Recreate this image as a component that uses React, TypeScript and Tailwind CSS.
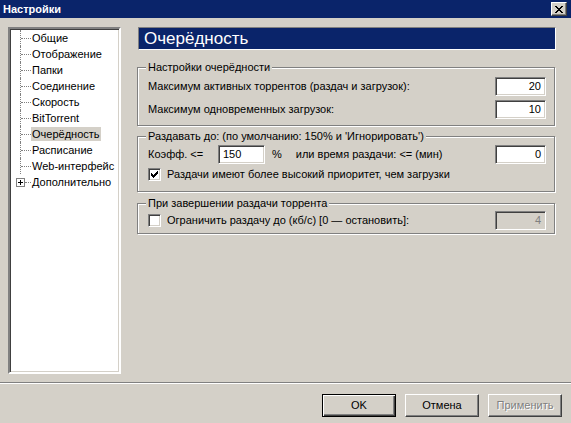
import React from "react";

const sunken =
  "border border-t-[#808080] border-l-[#808080] border-b-white border-r-white shadow-[inset_1px_1px_0_#404040,inset_-1px_-1px_0_#d4d0c8]";
const raised =
  "border border-t-white border-l-white border-b-[#404040] border-r-[#404040] shadow-[inset_-1px_-1px_0_#808080,inset_1px_1px_0_#d4d0c8]";

function Check({ checked }: { checked?: boolean }) {
  return (
    <span className={`w-[13px] h-[13px] bg-white flex items-center justify-center shrink-0 ${sunken}`}>
      {checked && (
        <svg width="7" height="7" viewBox="0 0 7 7" shapeRendering="crispEdges">
          <rect x="0" y="2" width="1" height="3" fill="#000" />
          <rect x="1" y="3" width="1" height="3" fill="#000" />
          <rect x="2" y="4" width="1" height="3" fill="#000" />
          <rect x="3" y="3" width="1" height="3" fill="#000" />
          <rect x="4" y="2" width="1" height="3" fill="#000" />
          <rect x="5" y="1" width="1" height="3" fill="#000" />
          <rect x="6" y="0" width="1" height="3" fill="#000" />
        </svg>
      )}
    </span>
  );
}

function Field({ value, w = "w-[51px]", left, disabled }: { value: string; w?: string; left?: boolean; disabled?: boolean }) {
  return (
    <div
      className={`${w} h-[19px] shrink-0 flex items-center px-[4px] ${left ? "justify-start" : "justify-end"} ${
        disabled ? "bg-[#d4d0c8] text-[#808080]" : "bg-white text-black"
      } ${sunken}`}
    >
      {value}
    </div>
  );
}

const tree = ["Общие", "Отображение", "Папки", "Соединение", "Скорость", "BitTorrent", "Очерёдность", "Расписание", "Web-интерфейс"];

export default function App() {
  return (
    <div className="w-[571px] h-[423px] bg-[#d4d0c8] text-black text-[11px] leading-[13px] font-['Liberation_Sans',Arial,sans-serif] overflow-hidden flex flex-col">
      {/* title bar */}
      <div className="h-[18px] bg-[#0a246a] flex items-center justify-between pl-[3px] pr-[4px]">
        <span className="text-white font-bold">Настройки</span>
        <div className={`w-[16px] h-[14px] bg-[#d4d0c8] flex items-center justify-center ${raised}`}>
          <svg width="8" height="7" viewBox="0 0 8 7" shapeRendering="crispEdges">
            <path d="M0 0h2v1h1v1h2V1h1V0h2v1H7v1H6v1H5v1h1v1h1v1h1v1H6V6H5V5H3v1H2v1H0V6h1V5h1V4h1V3H2V2H1V1H0z" fill="#000" />
          </svg>
        </div>
      </div>

      <div className="flex pt-[9px] pl-[8px] gap-[16px]">
        {/* tree */}
        <div className={`w-[113px] h-[347px] bg-white pt-[1px] border-2 border-t-[#808080] border-l-[#808080] border-b-white border-r-white shadow-[inset_1px_1px_0_#404040,inset_-1px_-1px_0_#d4d0c8]`}>
          {tree.map((t) => (
            <div key={t} className="h-[16px] flex items-center">
              <div className="ml-[10px] w-[11px] self-stretch border-l border-dotted border-[#808080] flex items-center">
                <div className="w-full border-t border-dotted border-[#808080]" />
              </div>
              <span className={`px-[1px] h-[14px] leading-[14px] whitespace-nowrap ${t === "Очерёдность" ? "bg-[#d4d0c8]" : ""}`}>{t}</span>
            </div>
          ))}
          <div className="h-[16px] flex items-center">
            <div className="ml-[6px] w-[9px] h-[9px] border border-[#808080] bg-white flex items-center justify-center">
              <svg width="5" height="5" viewBox="0 0 5 5" shapeRendering="crispEdges">
                <path d="M0 2h5v1H0zM2 0h1v5H2z" fill="#000" />
              </svg>
            </div>
            <div className="w-[6px] border-t border-dotted border-[#808080]" />
            <span className="px-[1px] whitespace-nowrap">Дополнительно</span>
          </div>
        </div>

        {/* right column */}
        <div className="w-[419px] flex flex-col">
          <div className="ml-[1px] h-[23px] bg-[#0a246a] border border-t-[#808080] border-l-[#808080] border-b-white border-r-white flex items-center px-[5px]">
            <span className="text-white text-[17px] leading-[20px]">Очерёдность</span>
          </div>

          <fieldset className="mt-[11px] mr-[1px] border border-[#808080] shadow-[inset_1px_1px_0_#fff,1px_1px_0_#fff] pl-[10px] pr-[8px] pb-[6px]">
            <legend className="-ml-[2px] px-[2px] bg-[#d4d0c8]">Настройки очерёдности</legend>
            <div className="mt-[3px] h-[19px] flex items-center justify-between">
              <span>Максимум активных торрентов (раздач и загрузок):</span>
              <Field value="20" />
            </div>
            <div className="mt-[4px] h-[19px] flex items-center justify-between">
              <span>Максимум одновременных загрузок:</span>
              <Field value="10" />
            </div>
          </fieldset>

          <fieldset className="mt-[4px] mr-[1px] border border-[#808080] shadow-[inset_1px_1px_0_#fff,1px_1px_0_#fff] pl-[10px] pr-[8px] pb-[9px]">
            <legend className="-ml-[2px] px-[2px] bg-[#d4d0c8]">Раздавать до: (по умолчанию: 150% и 'Игнорировать')</legend>
            <div className="mt-[2px] h-[19px] flex items-center">
              <span className="w-[70px]">Коэфф. &lt;=</span>
              <Field value="150" w="w-[47px]" left />
              <span className="ml-[7px]">%</span>
              <span className="ml-[14px]">или время раздачи: &lt;= (мин)</span>
              <div className="ml-auto">
                <Field value="0" />
              </div>
            </div>
            <div className="mt-[3px] h-[15px] flex items-center gap-[6px]">
              <Check checked />
              <span>Раздачи имеют более высокий приоритет, чем загрузки</span>
            </div>
          </fieldset>

          <fieldset className="mt-[5px] mr-[1px] border border-[#808080] shadow-[inset_1px_1px_0_#fff,1px_1px_0_#fff] pl-[10px] pr-[8px] pb-[3px]">
            <legend className="-ml-[2px] px-[2px] bg-[#d4d0c8]">При завершении раздачи торрента</legend>
            <div className="mt-[1px] h-[19px] flex items-center gap-[6px]">
              <Check />
              <span>Ограничить раздачу до (кб/с) [0 — остановить]:</span>
              <div className="ml-auto">
                <Field value="4" disabled />
              </div>
            </div>
          </fieldset>
        </div>
      </div>

      {/* separator */}
      <div className="mt-[8px] h-[2px] border-t border-[#808080] border-b border-b-white" />

      {/* buttons */}
      <div className="mt-[10px] flex justify-end gap-[9px] pr-[9px]">
        <button className="w-[74px] h-[23px] bg-[#d4d0c8] border border-black shadow-[inset_1px_1px_0_#fff,inset_-1px_-1px_0_#404040,inset_-2px_-2px_0_#808080]">
          OK
        </button>
        <button className={`w-[74px] h-[23px] bg-[#d4d0c8] ${raised}`}>Отмена</button>
        <button className={`w-[74px] h-[23px] bg-[#d4d0c8] text-[#808080] [text-shadow:1px_1px_0_#fff] ${raised}`}>Применить</button>
      </div>
    </div>
  );
}
